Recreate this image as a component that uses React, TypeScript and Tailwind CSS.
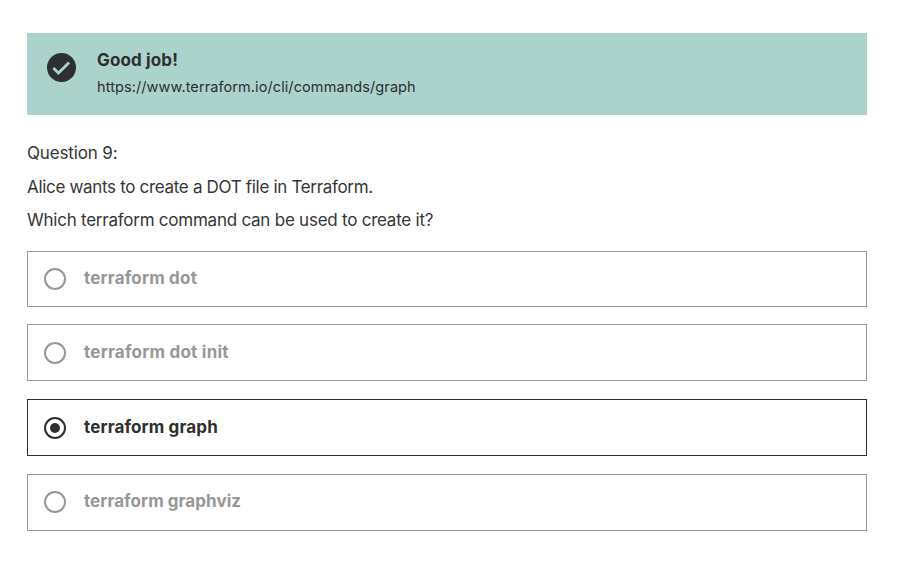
const answers = [
  { text: "terraform dot", box: "h-14 mb-[17px]", radio: "mb-px", label: "pb-0.5 tracking-[0.19px]" },
  { text: "terraform dot init", box: "h-[57px] mb-[18px]", radio: "", label: "pb-0.5 tracking-[0.23px]" },
  { text: "terraform graph", box: "h-[57px] mb-[18px]", radio: "", label: "pb-0.5 tracking-[0.14px]" },
  { text: "terraform graphviz", box: "h-[57px]", radio: "mb-px", label: "pb-[3px] tracking-[0.06px]" },
];

export default function App() {
  return (
    <main className="h-[573px] w-[906px] whitespace-nowrap bg-white pt-[33px] pl-[27px] font-['Inter',sans-serif] text-[17px] leading-6 text-[#2d2f31]">
      <section className="flex h-[82px] w-[840px] bg-[#acd2cc] pl-5">
        <svg width="30" height="30" viewBox="0 0 30 30" className="mt-5 shrink-0">
          <circle cx="14.5" cy="14.5" r="14.5" fill="#2d2f31" />
          <path d="m6.3 14.9 5.2 5.1 10.6-10.4" fill="none" stroke="#acd2cc" strokeWidth="2.8" />
        </svg>
        <div className="ml-5 pt-[15px]">
          <h1 className="font-bold tracking-[0.14px]">Good job!</h1>
          <p className="mt-[3px] text-[14.5px] tracking-[0.09px]">https://www.terraform.io/cli/commands/graph</p>
        </div>
      </section>
      <section className="pt-[26px] text-[#333537]">
        <p className="tracking-[-0.15px]">Question 9:</p>
        <p className="mt-[10px] tracking-[-0.32px]">Alice wants to create a DOT file in Terraform.</p>
        <p className="mt-[9px] tracking-[-0.24px]">Which terraform command can be used to create it?</p>
      </section>
      <section className="mt-[19px] w-[840px]">
        {answers.map(({ text, box, radio, label }, i) => (
          <div key={text} className={`flex items-center border pl-4 ${box} ${i === 2 ? "border-[#2d2f31]" : "border-[#969798] text-[#969798]"}`}>
            <svg width="22" height="22" viewBox="0 0 22 22" className={`shrink-0 ${radio}`}>
              <circle cx="11" cy="11" r="10" fill="none" stroke="currentColor" strokeWidth="2" />
              {i === 2 && <circle cx="11" cy="11" r="5" fill="currentColor" />}
            </svg>
            <span className={`ml-[18px] font-bold ${label}`}>{text}</span>
          </div>
        ))}
      </section>
    </main>
  );
}
